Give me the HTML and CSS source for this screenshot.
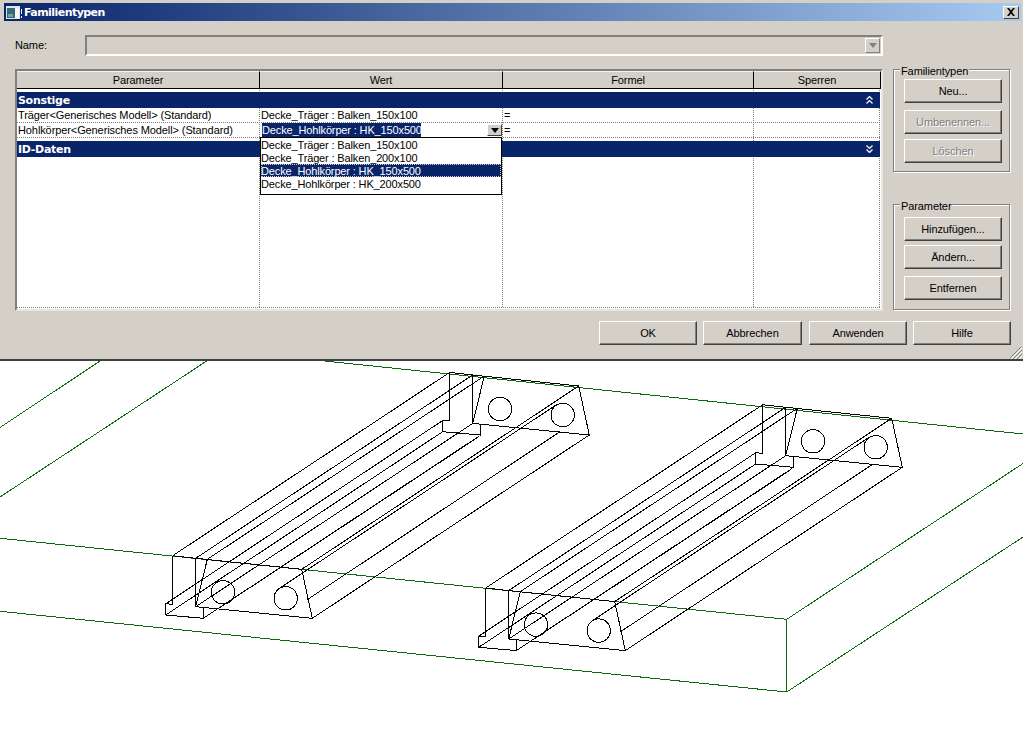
FILE: index.html
```html
<!DOCTYPE html>
<html lang="de">

<head>
    <meta charset="UTF-8">
    <title>Familientypen</title>
    <link rel="stylesheet" href="styles.css">
</head>

<body>
    <div class="dialog">
        <div class="titlebar">
            <svg class="app-icon" width="16" height="13" viewBox="0 0 16 13">
                <rect x="0" y="0" width="14" height="13" fill="#dfe6ee" />
                <rect x="1" y="2" width="8" height="10" fill="#34687a" />
                <rect x="2" y="8" width="5" height="3" fill="#6fa898" />
                <rect x="9" y="2" width="4" height="10" fill="#f4f6f8" />
                <rect x="15" y="3" width="1" height="5" fill="#ffffff" />
                <rect x="15" y="10" width="1" height="2" fill="#ffffff" />
            </svg>
            <span class="title-text">Familientypen</span>
            <button class="close-btn" type="button" aria-label="Schließen">
                <svg width="10" height="8" viewBox="0 0 10 8">
                    <path d="M1 0h2l2 2.500 2-2.500h2l-3 4 3 4h-2l-2-2.500-2 2.500h-2l3-4z" fill="#000" />
                </svg>
            </button>
        </div>

        <div class="name-row">
            <label class="name-label">Name:</label>
            <div class="combo">
                <span class="combo-arrow"><i class="tri tri-off"></i></span>
            </div>
        </div>

        <div class="main">
            <div class="grid-frame">
                <div class="grid-head">
                    <div class="head-cell">Parameter</div>
                    <div class="head-cell">Wert</div>
                    <div class="head-cell">Formel</div>
                    <div class="head-cell">Sperren</div>
                </div>
                <div class="grid-body">
                    <div class="bar">
                        <span>Sonstige</span>
                        <svg width="7" height="8" viewBox="0 0 7 8">
                            <path d="M.5 3.500l3-3 3 3M.5 7.500l3-3 3 3" fill="none" stroke="#fff" stroke-width="1.200" />
                        </svg>
                    </div>
                    <div class="row">
                        <div class="cell">Träger&lt;Generisches Modell&gt; (Standard)</div>
                        <div class="cell cell-value">Decke_Träger : Balken_150x100</div>
                        <div class="cell">=</div>
                        <div class="cell"></div>
                    </div>
                    <div class="row">
                        <div class="cell">Hohlkörper&lt;Generisches Modell&gt; (Standard)</div>
                        <div class="cell cell-value cell-edit">
                            <span class="selected">Decke_Hohlkörper : HK_150x500</span>
                            <span class="drop-btn"><i class="tri"></i></span>
                            <ul class="dropdown">
                                <li>Decke_Träger : Balken_150x100</li>
                                <li>Decke_Träger : Balken_200x100</li>
                                <li class="active">Decke_Hohlkörper : HK_150x500</li>
                                <li>Decke_Hohlkörper : HK_200x500</li>
                            </ul>
                        </div>
                        <div class="cell">=</div>
                        <div class="cell"></div>
                    </div>
                    <div class="bar bar-second">
                        <span>ID-Daten</span>
                        <svg width="7" height="8" viewBox="0 0 7 8">
                            <path d="M.5 .5l3 3 3-3M.5 4.500l3 3 3-3" fill="none" stroke="#fff" stroke-width="1.200" />
                        </svg>
                    </div>
                </div>
            </div>

            <div class="side">
                <div class="group group-types">
                    <span class="legend">Familientypen</span>
                    <button class="btn" type="button">Neu...</button>
                    <button class="btn btn-disabled gap-7" type="button">Umbenennen...</button>
                    <button class="btn btn-disabled gap-5" type="button">Löschen</button>
                </div>
                <div class="group group-params">
                    <span class="legend">Parameter</span>
                    <button class="btn" type="button">Hinzufügen...</button>
                    <button class="btn gap-4" type="button">Ändern...</button>
                    <button class="btn gap-7" type="button">Entfernen</button>
                </div>
            </div>
        </div>

        <div class="footer">
            <button class="btn" type="button">OK</button>
            <button class="btn btn-wide" type="button">Abbrechen</button>
            <button class="btn" type="button">Anwenden</button>
            <button class="btn" type="button">Hilfe</button>
        </div>

        <svg class="grip" width="13" height="12" viewBox="0 0 13 12">
            <path d="M12 0L1 11M13 3L4 12M13 7L8 12" stroke="#808080" fill="none" />
            <path d="M13 1L2 12M13 5L6 12M13 9L10 12" stroke="#fff" fill="none" />
        </svg>
    </div>

    <svg class="model" width="1023" height="379" viewBox="0 361 1023 379">
        <defs>
            <g id="profile">
                <path d="M172.700 555.700L195.700 558.300L301.700 569.300L312.300 618.300L195.700 606.700V558.300M207.300 559.300L195.700 606.700M172.700 555.700V604.300L165.700 603.800V615L203.300 618.300V607.500" />
                <circle cx="223" cy="592.300" r="11.700" />
                <circle cx="285.700" cy="598.300" r="11.700" />
            </g>
            <g id="beam">
                <use href="#profile" />
                <use href="#profile" transform="translate(277 -183.300)" />
                <path d="M172.700 555.700l277-183.300M195.700 558.300l277-183.300M207.300 559.300l277-183.300M301.700 569.300l277-183.300M312.300 618.300l277-183.300M195.700 606.700l277-183.300M165.700 603.800l277-183.300M165.700 615l277-183.300M203.300 618.300L479.300 436M233.300 598.600L478 437.200M279.200 588.500L556 405M306.700 600L560 431.700" />
            </g>
        </defs>
        <g class="slab">
            <path d="M320 360.500L1023 434M0 538.300L786.700 619.300L1023 463.500M786.700 619.300V692M0 611.300L786.700 692L1023 537M0 427.500L100 361M0 497L206.700 361" />
        </g>
        <g class="beams">
            <use href="#beam" />
            <use href="#beam" transform="translate(313 32.300)" />
        </g>
    </svg>
</body>

</html>
```

FILE: styles.css
```css
* {
    box-sizing: border-box;
}

body {
    margin: 0;
    background-color: #fff;
    font-family: "Liberation Sans", Arial, sans-serif;
    font-size: 11px;
    letter-spacing: -0.1px;
    color: #000;
    overflow: hidden;
}

.dialog {
    position: relative;
    height: 361px;
    padding-top: 3px;
    background-color: #d4d0c8;
    border-bottom: 2px solid #404040;
}

.titlebar {
    display: flex;
    align-items: center;
    height: 18px;
    margin: 0 2px 0 4px;
    padding: 0 2px 0 2px;
    background: linear-gradient(to right, #0a246a, #a6caf0);
}

.app-icon {
    flex: none;
}

.title-text {
    margin-left: 2px;
    color: #fff;
    font-family: "DejaVu Sans", sans-serif;
    font-size: 11px;
    font-weight: bold;
    letter-spacing: -0.55px;
}

.close-btn {
    display: flex;
    align-items: center;
    justify-content: center;
    width: 16px;
    height: 13px;
    margin-left: auto;
    padding: 0;
    background-color: #d4d0c8;
    border: 1px solid;
    border-color: #fff #404040 #404040 #fff;
}

.name-row {
    display: flex;
    align-items: center;
    height: 21px;
    margin: 14px 0 0 15px;
}

.name-label {
    width: 70px;
    padding-bottom: 1px;
}

.combo {
    display: flex;
    justify-content: flex-end;
    width: 798px;
    height: 21px;
    padding: 1px;
    border: 2px solid;
    border-color: #808080 #fff #fff #808080;
}

.combo-arrow {
    display: flex;
    align-items: center;
    justify-content: center;
    width: 15px;
    height: 15px;
    border: 1px solid;
    border-color: #fff #808080 #808080 #fff;
}

.tri {
    display: block;
    width: 0;
    height: 0;
    border-left: 4px solid transparent;
    border-right: 4px solid transparent;
    border-top: 5px solid #000;
}

.tri-off {
    border-top-color: #808080;
}

.main {
    display: flex;
    margin: 13px 0 0 15px;
}

.grid-frame {
    width: 868px;
    height: 242px;
    background-color: #fff;
    border: 2px solid;
    border-color: #808080 #e8e6e0 #e8e6e0 #808080;
}

.grid-head {
    display: grid;
    grid-template-columns: 243px 243px 251px 127px;
    height: 18px;
}

.head-cell {
    height: 18px;
    line-height: 17px;
    text-align: center;
    background-color: #d4d0c8;
    border-top: 1px solid #f4f2ee;
    border-right: 1px solid #000;
    border-bottom: 1px solid #000;
}

.grid-body {
    height: 220px;
    padding: 3px 1px 0 0;
    background-image:
        repeating-linear-gradient(to bottom, #808080 0 1px, transparent 1px 2px),
        repeating-linear-gradient(to bottom, #808080 0 1px, transparent 1px 2px),
        repeating-linear-gradient(to bottom, #808080 0 1px, transparent 1px 2px),
        repeating-linear-gradient(to bottom, #808080 0 1px, transparent 1px 2px),
        repeating-linear-gradient(to right, #808080 0 1px, transparent 1px 2px);
    background-size: 1px 218px, 1px 218px, 1px 218px, 1px 218px, 863px 1px;
    background-position: 242px 1px, 485px 1px, 736px 1px, 862px 1px, 0 218px;
    background-repeat: no-repeat;
}

.bar {
    display: flex;
    align-items: center;
    justify-content: space-between;
    height: 16px;
    padding: 0 7px 0 1px;
    background-color: #0a246a;
    color: #fff;
    font-family: "DejaVu Sans", sans-serif;
    font-weight: bold;
    letter-spacing: -0.3px;
}

.bar-second {
    margin-top: 3px;
}

.row {
    display: grid;
    grid-template-columns: 243px 243px 251px 126px;
    height: 15px;
    background-image: repeating-linear-gradient(to right, #808080 0 1px, transparent 1px 2px);
    background-size: 100% 1px;
    background-position: 0 14px;
    background-repeat: no-repeat;
}

.cell {
    height: 14px;
    padding-left: 1px;
    line-height: 14px;
    white-space: nowrap;
}

.cell-value {
    letter-spacing: -0.14px;
}

.cell-edit {
    position: relative;
    padding-left: 2px;
}

.selected {
    display: inline-block;
    width: 159px;
    height: 14px;
    background-color: #0a246a;
    color: #fff;
}

.drop-btn {
    position: absolute;
    top: 1px;
    right: 1px;
    display: flex;
    align-items: center;
    justify-content: center;
    width: 15px;
    height: 12px;
    background-color: #d4d0c8;
    border: 1px solid;
    border-color: #fff #404040 #404040 #fff;
}

.dropdown {
    position: absolute;
    top: 100%;
    left: 0;
    z-index: 2;
    width: 242px;
    height: 58px;
    margin: 0;
    padding: 0;
    list-style: none;
    background-color: #fff;
    border: 1px solid #000;
}

.dropdown li {
    height: 13px;
    line-height: 15px;
}

.dropdown .active {
    background-color: #0a246a;
    color: #fff;
    outline: 1px dotted #d4d0c8;
    outline-offset: -1px;
}

.side {
    display: flex;
    flex-direction: column;
    gap: 32px;
    width: 117px;
    margin-left: 10px;
}

.group {
    position: relative;
    padding: 9px 0 0 10px;
    border: 1px solid #808080;
    box-shadow: 1px 1px 0 #fff, inset 1px 1px 0 #fff;
}

.group-types {
    height: 103px;
}

.group-params {
    height: 106px;
    padding-top: 12px;
}

.legend {
    position: absolute;
    top: -5px;
    left: 6px;
    padding: 0 1px;
    background-color: #d4d0c8;
}

.btn {
    display: block;
    width: 98px;
    height: 24px;
    padding: 0;
    background-color: #d4d0c8;
    border: 1px solid;
    border-color: #fff #404040 #404040 #fff;
    box-shadow: inset -1px -1px 0 #808080;
    font-family: inherit;
    font-size: 11px;
    letter-spacing: inherit;
    color: #000;
}

.btn-wide {
    width: 99px;
    margin-right: 1px;
}

.btn-disabled {
    color: #808080;
    text-shadow: 1px 1px 0 #fff;
}

.gap-4 {
    margin-top: 4px;
}

.gap-5 {
    margin-top: 5px;
}

.gap-7 {
    margin-top: 7px;
}

.footer {
    display: flex;
    justify-content: flex-end;
    gap: 6px;
    margin-top: 10px;
    padding-right: 12px;
}

.grip {
    position: absolute;
    right: 1px;
    bottom: 0;
}

.model {
    display: block;
}

.slab {
    fill: none;
    stroke: #0b6a0b;
    stroke-width: 1;
    shape-rendering: crispEdges;
}

.beams {
    fill: none;
    stroke: #000;
    stroke-width: 1;
    shape-rendering: crispEdges;
}
```
